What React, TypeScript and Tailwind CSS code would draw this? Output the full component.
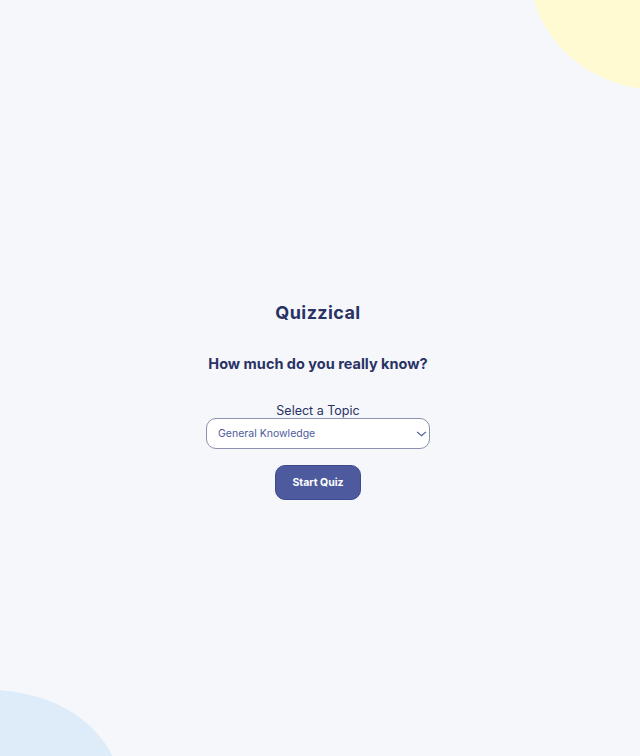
import React, { useState } from 'react';

const topics = ['General Knowledge', 'Books', 'Film', 'Music', 'Science & Nature', 'Computers', 'History'];

export default function App() {
  const [topic, setTopic] = useState(topics[0]);

  return (
    <div className="relative h-[756px] w-full overflow-hidden bg-[#F5F7FB] text-[#293264] font-['Inter',sans-serif]">
      {/* decorative blobs */}
      <div className="absolute left-[530px] top-[-150px] h-[240px] w-[260px] rounded-[50%] bg-[#FFFAD1]" />
      <div className="absolute left-[-140px] top-[690px] h-[200px] w-[260px] rounded-[50%] bg-[#DEEBF8]" />

      <div className="relative flex h-full flex-col items-center justify-center pt-[48px] pr-[4px]">
        <h1 className="text-[18px] font-bold leading-none tracking-[0.4px]">Quizzical</h1>
        <p className="mt-[35px] text-[14.5px] font-bold leading-none">How much do you really know?</p>

        <label htmlFor="topic" className="mt-[33px] text-[12.5px] leading-none">
          Select a Topic
        </label>
        <div className="relative mt-[1px] w-[224px]">
          <select
            id="topic"
            value={topic}
            onChange={(e) => setTopic(e.target.value)}
            className="h-[31px] w-full appearance-none rounded-[10px] border border-[#8C91AF] bg-white pl-[11px] text-[10.5px] text-[#4D5B9E] outline-none"
          >
            {topics.map((t) => (
              <option key={t}>{t}</option>
            ))}
          </select>
          <svg
            className="pointer-events-none absolute right-[3px] top-[10px] h-[11px] w-[11px]"
            viewBox="0 0 10 10"
            fill="none"
            stroke="#4D5B9E"
            strokeWidth="1.1"
          >
            <path d="M1 3.5 L5 7 L9 3.5" />
          </svg>
        </div>

        <button className="mt-[16px] h-[35px] w-[86px] rounded-[10px] border border-[#3F4C8A] bg-[#4D5B9E] text-[10.5px] font-bold text-white">
          Start Quiz
        </button>
      </div>
    </div>
  );
}
